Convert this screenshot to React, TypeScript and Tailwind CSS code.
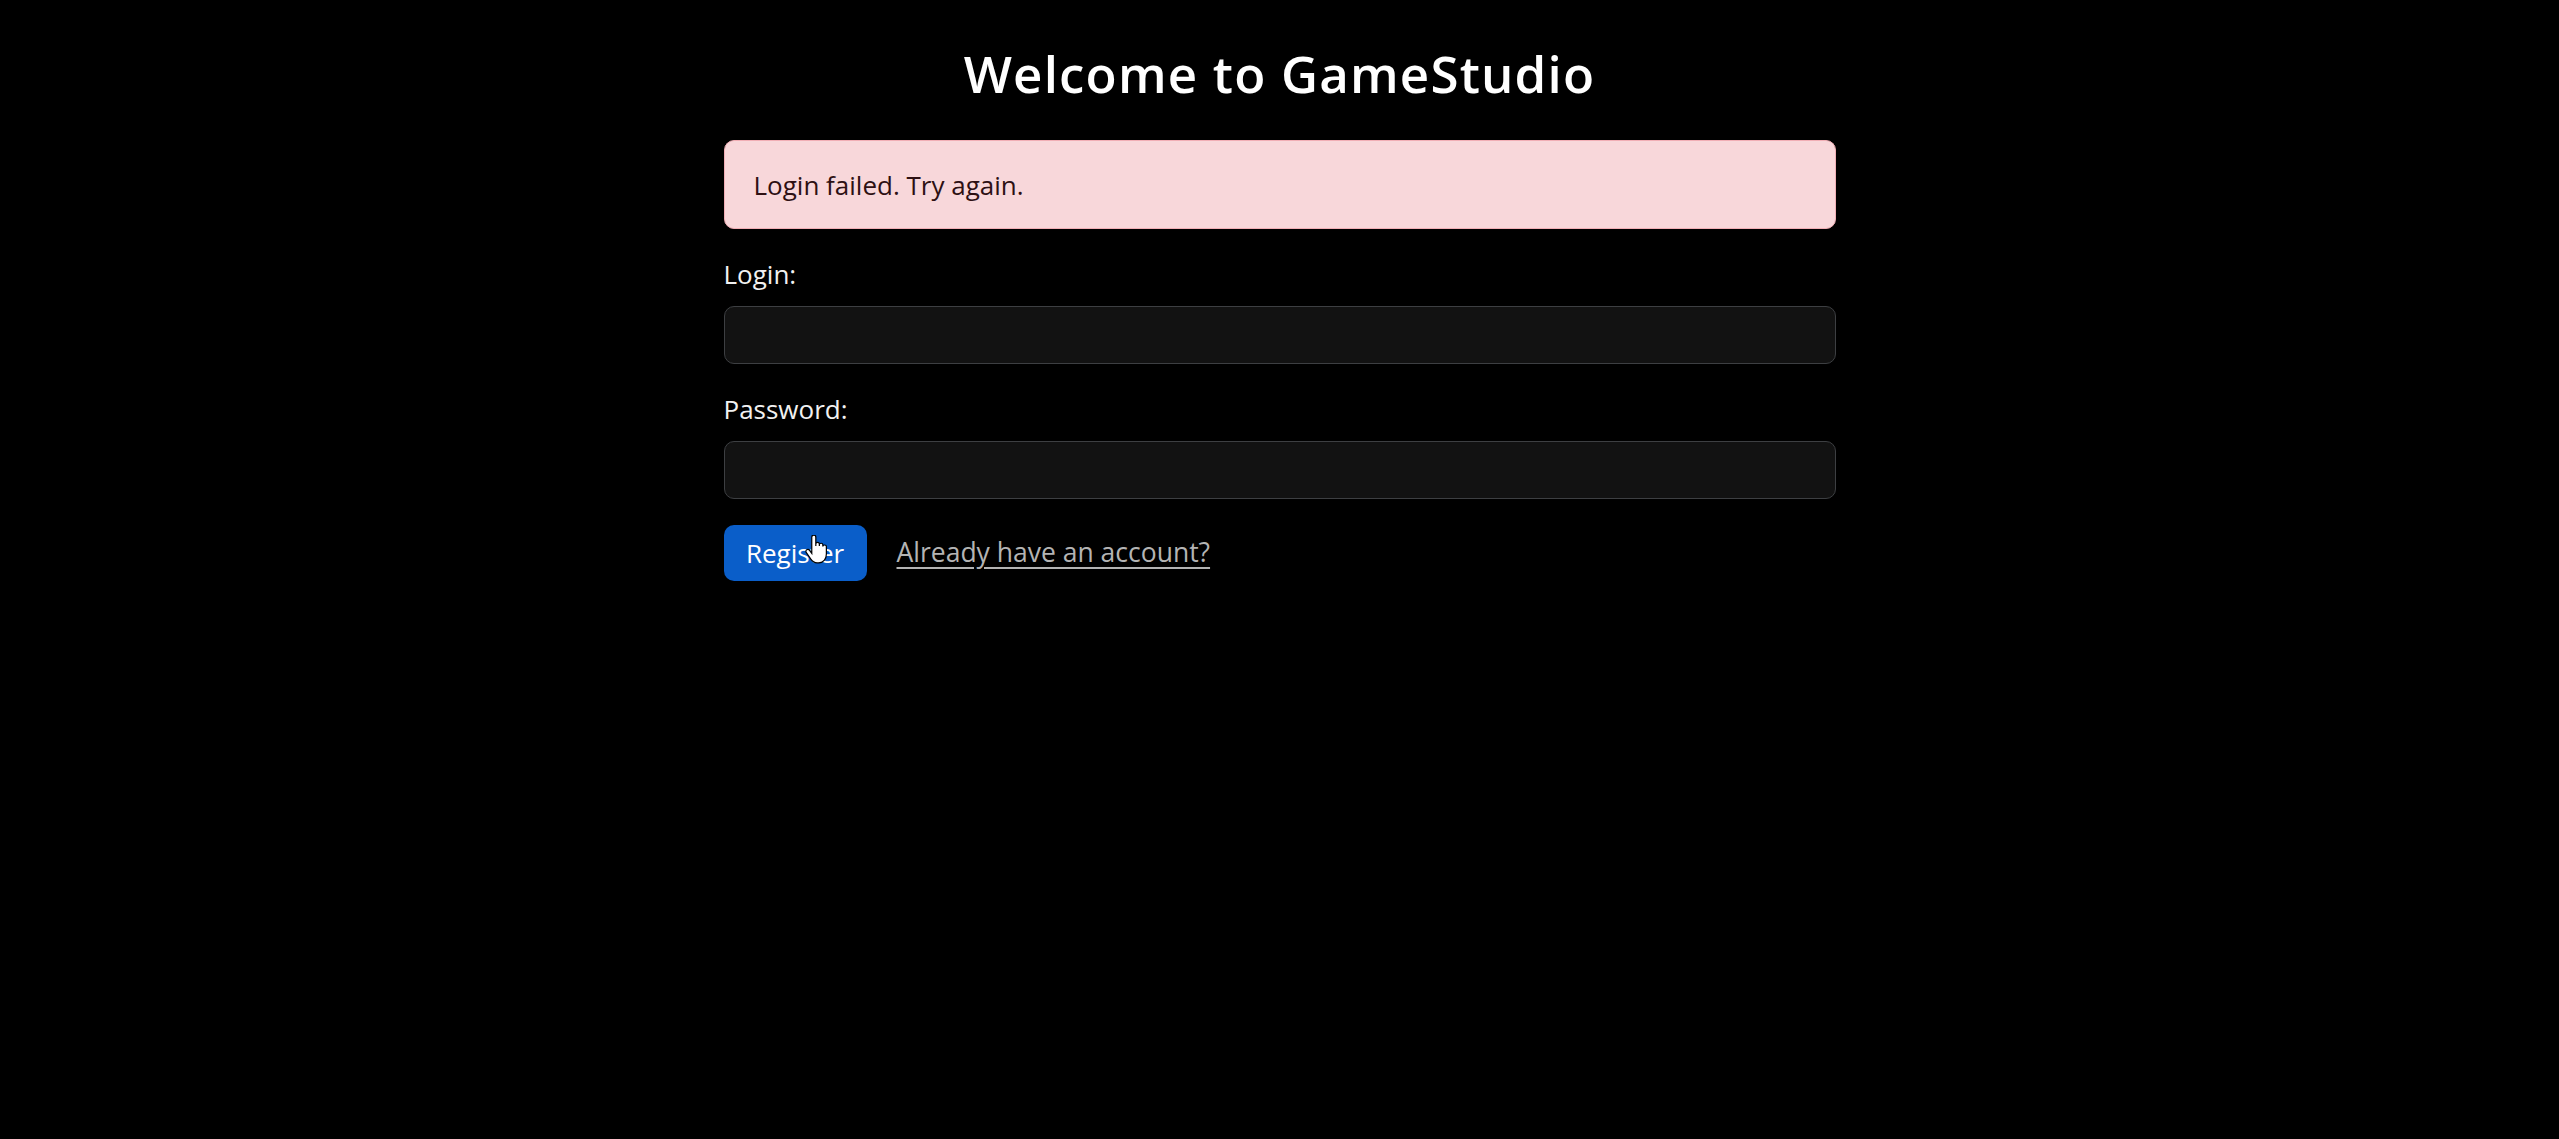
import { useState } from "react";

export default function App() {
  const [login, setLogin] = useState("");
  const [password, setPassword] = useState("");

  return (
    <div className="min-h-[1139px] w-full bg-black font-['Open_Sans',sans-serif] text-white">
      <div className="mx-auto w-[1112px] pt-[43px]">
        <h1 className="text-center text-[51px] font-semibold leading-[60px] tracking-[1.2px]">
          Welcome to GameStudio
        </h1>

        <div className="mt-[37px] h-[89px] rounded-[10px] border-[1.6px] border-[#f1aeb5] bg-[#f8d7da] px-[29px] text-[26px] leading-[88px] text-[#2e1013]">
          Login failed. Try again.
        </div>

        <form className="mt-[26px]" onSubmit={(e) => e.preventDefault()}>
          <div className="mb-[26px]">
            <label htmlFor="login" className="mb-[13px] block text-[26px] leading-[38px] text-[#f1f1f1]">
              Login:
            </label>
            <input
              id="login"
              type="text"
              value={login}
              onChange={(e) => setLogin(e.target.value)}
              className="block h-[58px] w-full rounded-[10px] border-[1.6px] border-[#3d3f42] bg-[#121212] px-[19px] text-[26px] text-white outline-none"
            />
          </div>
          <div className="mb-[26px]">
            <label htmlFor="password" className="mb-[13px] block text-[26px] leading-[38px] text-[#f1f1f1]">
              Password:
            </label>
            <input
              id="password"
              type="password"
              value={password}
              onChange={(e) => setPassword(e.target.value)}
              className="block h-[58px] w-full rounded-[10px] border-[1.6px] border-[#3d3f42] bg-[#121212] px-[19px] text-[26px] text-white outline-none"
            />
          </div>
          <div className="flex items-center gap-[30px]">
            <button
              type="submit"
              className="relative h-[56px] w-[143px] rounded-[10px] bg-[#0a5ec9] text-[26px] text-white"
            >
              Register
              {/* mouse pointer seen in the screenshot */}
              <svg
                className="pointer-events-none absolute left-[81px] top-[10px] h-[30px] w-[23px]"
                viewBox="0 0 17 22"
              >
                <path
                  d="M5 1.5c0-.8.6-1.5 1.5-1.5S8 .7 8 1.5V8V6.6c0-.8.6-1.2 1.3-1.2s1.3.4 1.3 1.2V8V7.2c0-.8.6-1.2 1.3-1.2s1.3.4 1.3 1.2v1.3c0-.8.6-1.2 1.3-1.2s1.3.4 1.3 1.2V14c0 3.5-2 6.5-5.5 6.5H9c-2.2 0-3.5-1-4.7-2.7L1 13c-.6-.8-.4-1.8.3-2.2.7-.4 1.6-.2 2.1.5L5 13.5V1.5z"
                  fill="#fff"
                  stroke="#000"
                  strokeWidth="0.9"
                />
              </svg>
            </button>
            <a href="#" className="text-[26.5px] text-[#b4b4b4] underline underline-offset-[5px]">
              Already have an account?
            </a>
          </div>
        </form>
      </div>
    </div>
  );
}
